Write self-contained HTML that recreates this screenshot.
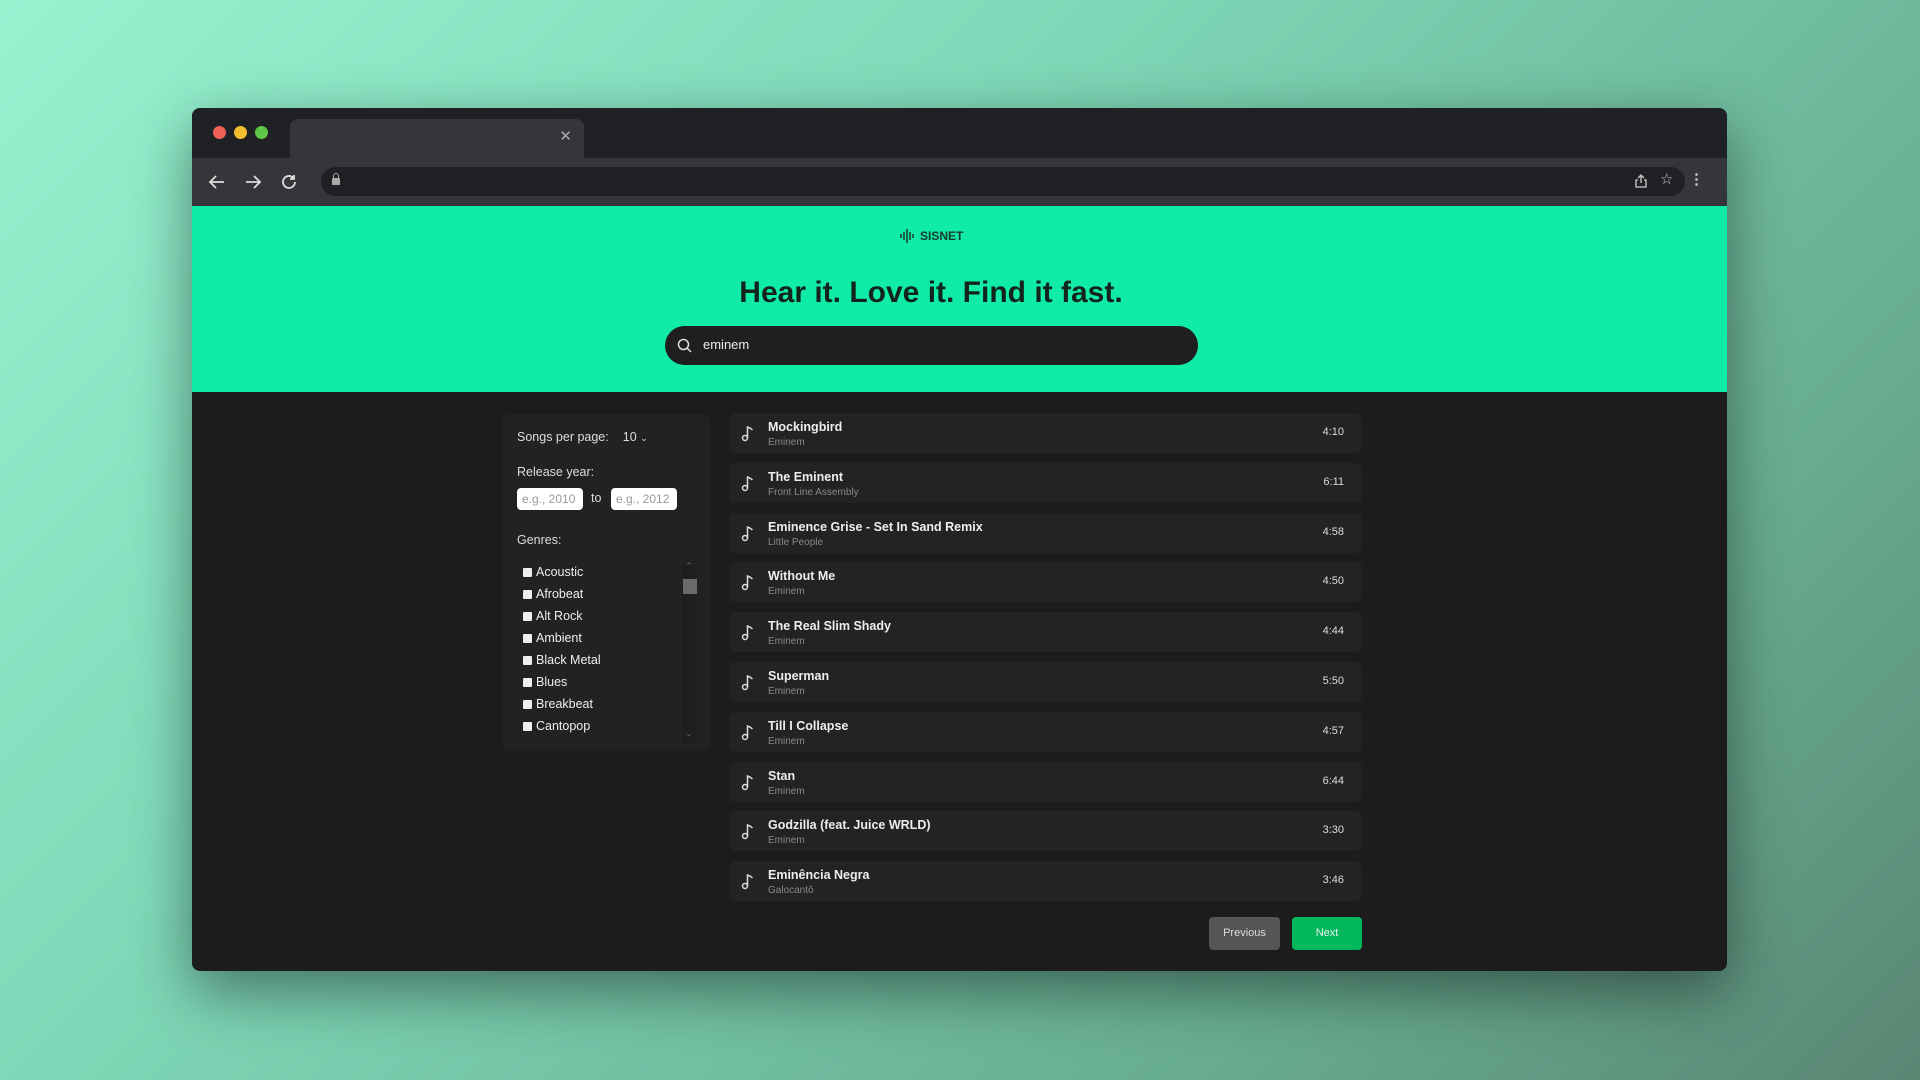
<!DOCTYPE html>
<html><head><meta charset="utf-8"><style>
*{margin:0;padding:0;box-sizing:border-box}
body{width:1920px;height:1080px;overflow:hidden;font-family:"Liberation Sans",sans-serif;background:linear-gradient(135deg,#97f2d0 0%,#80dab9 35%,#68ad92 75%,#5a8674 100%);position:relative}
.win{position:absolute;left:192px;top:108px;width:1535px;height:863px;background:#1c1c1c;border-radius:8px;overflow:hidden;box-shadow:0 20px 60px rgba(0,0,0,.45)}
.tabbar{position:absolute;left:0;top:0;width:100%;height:50px;background:#202124}
.dot{position:absolute;top:18px;width:13px;height:13px;border-radius:50%}
.tab{position:absolute;left:98px;top:11px;width:294px;height:40px;background:#35363a;border-radius:8px 8px 0 0}
.toolbar{position:absolute;left:0;top:50px;width:100%;height:48px;background:#35363a}
.addr{position:absolute;left:129px;top:9px;width:1364px;height:29px;background:#202124;border-radius:15px}
.hdr{position:absolute;left:0;top:98px;width:100%;height:186px;background:#10eba8}
.abs{position:absolute}
.side{position:absolute;left:310px;top:306px;width:208px;height:337px;background:#222;border-radius:8px;color:#ddd;font-size:12.5px}
.row{position:absolute;left:537px;width:633px;height:40px;background:#232323;border-radius:6px}
.row .t{position:absolute;left:39px;top:7px;color:#eee;font-weight:bold;font-size:12.5px}
.row .a{position:absolute;left:39px;top:24px;color:#888;font-size:10px}
.row .d{position:absolute;right:18px;top:13px;color:#ddd;font-size:11px}
.row svg{position:absolute;left:12px;top:11px}
.g{position:absolute;left:21px;font-size:12.5px;color:#eee}
.g i{display:inline-block;width:9px;height:9px;background:#eee;margin-right:4px;vertical-align:-1px;border-radius:1px}
</style></head><body>
<div class="win">
 <div class="tabbar">
  <div class="dot" style="left:21px;background:#ed5f57"></div>
  <div class="dot" style="left:42px;background:#f4bd2f"></div>
  <div class="dot" style="left:63px;background:#5fc648"></div>
  <div class="tab"><span style="position:absolute;right:12px;top:8px;color:#aaa;font-size:15px">✕</span></div>
 </div>
 <div class="toolbar">
  <svg class="abs" style="left:16px;top:15px" width="18" height="18" viewBox="0 0 18 18" fill="none" stroke="#ddd" stroke-width="1.8"><path d="M16 9H3M8 3L2 9l6 6"/></svg>
  <svg class="abs" style="left:52px;top:15px" width="18" height="18" viewBox="0 0 18 18" fill="none" stroke="#ddd" stroke-width="1.8"><path d="M2 9h13M10 3l6 6-6 6"/></svg>
  <svg class="abs" style="left:88px;top:15px" width="18" height="18" viewBox="0 0 18 18" fill="none" stroke="#ddd" stroke-width="1.8"><path d="M15 9a6 6 0 1 1-2-4.5"/><path d="M14 2v4h-4" fill="#ddd"/></svg>
  <div class="addr"><div class="abs" style="left:11px;top:11px;width:8px;height:7px;background:#aaa;border-radius:1px"></div><div class="abs" style="left:12px;top:6px;width:6px;height:7px;border:1.5px solid #aaa;border-radius:3px 3px 0 0"></div></div>
  <svg class="abs" style="left:1442px;top:16px" width="14" height="14" viewBox="0 0 14 14" fill="none" stroke="#ccc" stroke-width="1.3"><path d="M4 6H2v7h10V6h-2M7 9V1M4 4l3-3 3 3"/></svg>
  <span class="abs" style="left:1468px;top:12px;color:#ccc;font-size:15px">☆</span>
  <span class="abs" style="left:1497px;top:12px;color:#ccc;font-size:15px;font-weight:bold">⋮</span>
 </div>
 <div class="hdr">
  <div class="abs" style="left:708px;top:23px;color:#1a3a2e;font-size:12px;font-weight:bold;display:flex;align-items:center;gap:4px">
   <svg width="16" height="14" viewBox="0 0 16 14" stroke="#1a3a2e" stroke-width="1.5"><path d="M1 5v4M4 3v8M7 0v14M10 3v8M13 5v4"/></svg>SISNET</div>
  <div class="abs" style="left:0;width:1478px;top:70px;text-align:center;color:#13241d;font-size:30px;font-weight:bold">Hear it. Love it. Find it fast.</div>
  <div class="abs" style="left:473px;width:533px;height:39px;top:120px;background:#1f1f1f;border-radius:20px">
   <svg class="abs" style="left:12px;top:12px" width="15" height="15" viewBox="0 0 15 15" fill="none" stroke="#ddd" stroke-width="1.5"><circle cx="6.5" cy="6.5" r="5"/><path d="M10 10l4 4"/></svg>
   <span class="abs" style="left:38px;top:11px;color:#eee;font-size:13px">eminem</span>
  </div>
 </div>
 <div class="side">
  <div class="abs" style="left:15px;top:16px">Songs per page:<span style="margin-left:14px">10 <span style="font-size:9px">⌄</span></span></div>
  <div class="abs" style="left:15px;top:51px">Release year:</div>
  <div class="abs" style="left:15px;top:74px;width:66px;height:22px;background:#fff;border-radius:4px;color:#999;font-size:12px;padding:4px 5px">e.g., 2010</div>
  <div class="abs" style="left:89px;top:77px">to</div>
  <div class="abs" style="left:109px;top:74px;width:66px;height:22px;background:#fff;border-radius:4px;color:#999;font-size:12px;padding:4px 5px">e.g., 2012</div>
  <div class="abs" style="left:15px;top:119px">Genres:</div>
  <div class="g" style="top:151px"><i></i>Acoustic</div>
  <div class="g" style="top:173px"><i></i>Afrobeat</div>
  <div class="g" style="top:195px"><i></i>Alt Rock</div>
  <div class="g" style="top:217px"><i></i>Ambient</div>
  <div class="g" style="top:239px"><i></i>Black Metal</div>
  <div class="g" style="top:261px"><i></i>Blues</div>
  <div class="g" style="top:283px"><i></i>Breakbeat</div>
  <div class="g" style="top:305px"><i></i>Cantopop</div>
  <div class="abs" style="left:180px;top:150px;width:15px;height:180px;background:#1e1e1e"></div>
  <span class="abs" style="left:183px;top:147px;color:#666;font-size:9px">⌃</span>
  <div class="abs" style="left:181px;top:165px;width:14px;height:15px;background:#6a6a6a"></div>
  <span class="abs" style="left:183px;top:314px;color:#666;font-size:9px">⌄</span>
 </div>
 <div id="rows"></div>
 <div class="abs" style="left:1017px;top:809px;width:71px;height:33px;background:#555;border-radius:4px;color:#ddd;font-size:11px;text-align:center;line-height:33px">Previous</div>
 <div class="abs" style="left:1100px;top:809px;width:70px;height:33px;background:#03b85c;border-radius:4px;color:#eee;font-size:11px;text-align:center;line-height:33px">Next</div>
</div>
<script>
var d=[["Mockingbird","Eminem","4:10"],["The Eminent","Front Line Assembly","6:11"],["Eminence Grise - Set In Sand Remix","Little People","4:58"],["Without Me","Eminem","4:50"],["The Real Slim Shady","Eminem","4:44"],["Superman","Eminem","5:50"],["Till I Collapse","Eminem","4:57"],["Stan","Eminem","6:44"],["Godzilla (feat. Juice WRLD)","Eminem","3:30"],["Eminência Negra","Galocantô","3:46"]];
var h="";d.forEach(function(r,i){h+='<div class="row" style="top:'+(305+i*49.8)+'px"><svg width="14" height="18" viewBox="0 0 14 18" fill="none" stroke="#ddd" stroke-width="1.5"><circle cx="4" cy="14" r="2.5"/><path d="M6.5 14V3q3 1 5 3"/></svg><div class="t">'+r[0]+'</div><div class="a">'+r[1]+'</div><div class="d">'+r[2]+'</div></div>'});
document.getElementById("rows").innerHTML=h;
</script>
</body></html>
